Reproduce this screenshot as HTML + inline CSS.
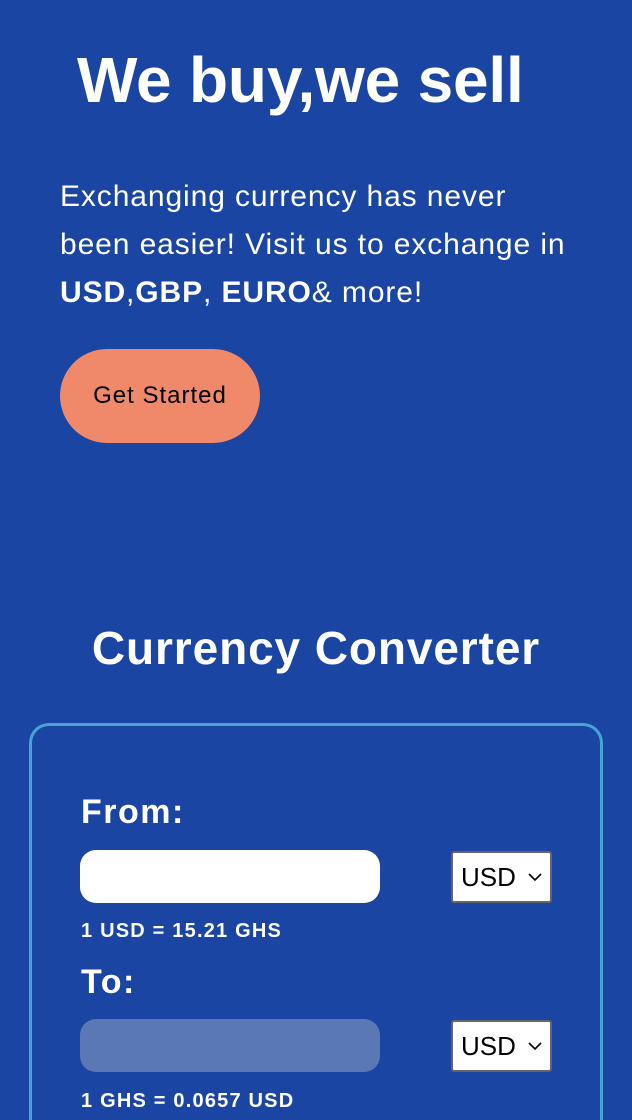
<!DOCTYPE html>
<html><head><meta charset="utf-8"><style>
html,body{margin:0;padding:0;width:632px;height:1120px;overflow:hidden}
body{background:#1a45a2;font-family:"Liberation Sans",Arial,sans-serif;color:#fff;position:relative}
.a{position:absolute;white-space:nowrap}
h1{position:absolute;left:77px;top:40px;margin:0;font-size:64px;font-weight:bold;line-height:80px;letter-spacing:-0.2px}
.p{left:60px;top:173px;font-size:30px;line-height:48px;letter-spacing:0.9px}
.btn{left:60px;top:349px;width:200px;height:94px;border-radius:47px;background:#f0886a;color:#000;font-size:24px;text-align:center;line-height:94px;letter-spacing:1px}
.h2{left:0;width:632px;text-align:center;top:620px;font-size:46px;font-weight:bold;line-height:56px;letter-spacing:0.9px}
.box{left:29px;top:723px;width:568px;height:400px;border:3px solid #4aa3d6;border-bottom:none;border-radius:20px 20px 0 0;box-sizing:border-box;width:574px;height:397px}
.lbl{font-size:34px;font-weight:bold;left:81px;line-height:40px;letter-spacing:1.5px}
.inp{left:80px;width:300px;height:53px;border-radius:16px}
.sel{left:451px;background:#fff;border:2px solid #666;border-radius:3px;color:#000;font-size:26px;line-height:48px;padding-left:8px;box-sizing:border-box;width:101px;height:52px}
.rate{left:81px;font-size:20px;font-weight:bold;line-height:24px;letter-spacing:1.2px}
</style></head><body>
<h1>We buy,we sell</h1>
<div class="a p">Exchanging currency has never<br>been easier! Visit us to exchange in<br><b>USD</b>,<b>GBP</b>, <b>EURO</b>&amp; more!</div>
<div class="a btn">Get Started</div>
<div class="a h2">Currency Converter</div>
<div class="a box"></div>
<div class="a lbl" style="top:792px">From:</div>
<div class="a inp" style="top:850px;background:#fff"></div>
<div class="a sel" style="top:851px">USD<svg style="position:absolute;right:8px;top:20px" width="14" height="9" viewBox="0 0 14 9"><path d="M1 1l6 6 6-6" stroke="#000" stroke-width="1.6" fill="none"/></svg></div>
<div class="a rate" style="top:919px">1 USD = 15.21 GHS</div>
<div class="a lbl" style="top:962px">To:</div>
<div class="a inp" style="top:1019px;background:#5a77b6"></div>
<div class="a sel" style="top:1020px">USD<svg style="position:absolute;right:8px;top:20px" width="14" height="9" viewBox="0 0 14 9"><path d="M1 1l6 6 6-6" stroke="#000" stroke-width="1.6" fill="none"/></svg></div>
<div class="a rate" style="top:1089px">1 GHS = 0.0657 USD</div>
</body></html>
